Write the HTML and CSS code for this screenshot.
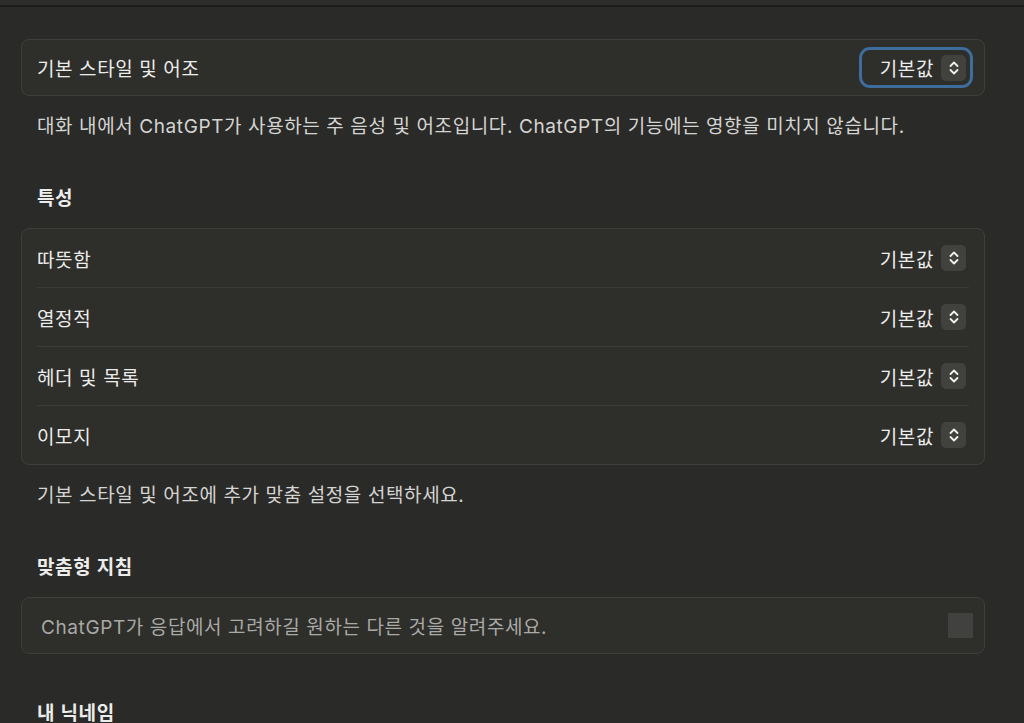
FILE: index.html
```html
<!DOCTYPE html>
<html lang="ko">
<head>
    <meta charset="UTF-8">
    <meta name="viewport" content="width=device-width, initial-scale=1.0">
    <title>개인 맞춤 설정</title>
    <link rel="stylesheet" href="styles.css">
</head>
<body>
    <div class="topbar"></div>

    <div class="content">
        <div class="card">
            <div class="row">
                <span class="label">기본 스타일 및 어조</span>
                <button class="select focused">기본값 <span class="chev"><svg viewBox="0 0 12 16" width="12" height="16"><path d="M2.5 6 L6 2.5 L9.5 6 M2.5 10 L6 13.5 L9.5 10" fill="none" stroke="currentColor" stroke-width="1.8" stroke-linecap="round" stroke-linejoin="round"/></svg></span></button>
            </div>
        </div>
        <p class="hint">대화 내에서 ChatGPT가 사용하는 주 음성 및 어조입니다. ChatGPT의 기능에는 영향을 미치지 않습니다.</p>

        <h3 class="section">특성</h3>
        <div class="card list">
            <div class="row">
                <span class="label">따뜻함</span>
                <button class="select">기본값 <span class="chev"><svg viewBox="0 0 12 16" width="12" height="16"><path d="M2.5 6 L6 2.5 L9.5 6 M2.5 10 L6 13.5 L9.5 10" fill="none" stroke="currentColor" stroke-width="1.8" stroke-linecap="round" stroke-linejoin="round"/></svg></span></button>
            </div>
            <div class="row">
                <span class="label">열정적</span>
                <button class="select">기본값 <span class="chev"><svg viewBox="0 0 12 16" width="12" height="16"><path d="M2.5 6 L6 2.5 L9.5 6 M2.5 10 L6 13.5 L9.5 10" fill="none" stroke="currentColor" stroke-width="1.8" stroke-linecap="round" stroke-linejoin="round"/></svg></span></button>
            </div>
            <div class="row">
                <span class="label">헤더 및 목록</span>
                <button class="select">기본값 <span class="chev"><svg viewBox="0 0 12 16" width="12" height="16"><path d="M2.5 6 L6 2.5 L9.5 6 M2.5 10 L6 13.5 L9.5 10" fill="none" stroke="currentColor" stroke-width="1.8" stroke-linecap="round" stroke-linejoin="round"/></svg></span></button>
            </div>
            <div class="row">
                <span class="label">이모지</span>
                <button class="select">기본값 <span class="chev"><svg viewBox="0 0 12 16" width="12" height="16"><path d="M2.5 6 L6 2.5 L9.5 6 M2.5 10 L6 13.5 L9.5 10" fill="none" stroke="currentColor" stroke-width="1.8" stroke-linecap="round" stroke-linejoin="round"/></svg></span></button>
            </div>
        </div>
        <p class="hint">기본 스타일 및 어조에 추가 맞춤 설정을 선택하세요.</p>

        <h3 class="section">맞춤형 지침</h3>
        <div class="card input-card">
            <span class="placeholder">ChatGPT가 응답에서 고려하길 원하는 다른 것을 알려주세요.</span>
            <span class="grip"></span>
        </div>

        <h3 class="section">내 닉네임</h3>
    </div>
</body>
</html>
```

FILE: styles.css
```css
body {
    margin: 0;
    background-color: #2a2a28;
    color: #ececea;
    font-family: Inter, "Noto Sans CJK KR", sans-serif;
    font-size: 19px;
    letter-spacing: 0.6px;
    overflow: hidden;
    height: 723px;
}

.topbar {
    height: 5px;
    background-color: #2d2d2b;
    border-bottom: 2px solid #1b1b1a;
}

.content {
    width: 964px;
    margin-left: 21px;
    padding-top: 32px;
}

.card {
    background-color: #2e2e2b;
    border: 1px solid #3e3e3b;
    border-radius: 8px;
}

.row {
    display: flex;
    align-items: center;
    justify-content: space-between;
    height: 55px;
    padding: 0 18px 0 15px;
}

.list .row {
    height: 58px;
    margin: 0 15px;
    padding: 0 3px 0 0;
    border-bottom: 1px solid #3a3a37;
}

.list .row:last-child {
    border-bottom: none;
}

.label {
    color: #ececea;
}

.select {
    display: flex;
    align-items: center;
    gap: 7px;
    background: none;
    border: 3px solid transparent;
    border-radius: 11px;
    color: #ececea;
    font-family: inherit;
    font-size: 19px;
    letter-spacing: 0.6px;
    padding: 4px 4px 4px 18px;
    margin-right: -7px;
}

.select.focused {
    border-color: #3e6c9c;
}

.chev {
    display: flex;
    align-items: center;
    justify-content: center;
    width: 25px;
    height: 26px;
    border-radius: 5px;
    background-color: #41413e;
    color: #f0f0ee;
}

.hint {
    margin: 19px 0 0 16px;
    line-height: 24px;
    color: #d4d4d2;
}

.section {
    margin: 48px 0 17px 16px;
    font-size: 19px;
    font-weight: 600;
    line-height: 24px;
    color: #ececea;
}

.input-card {
    display: flex;
    align-items: center;
    justify-content: space-between;
    height: 55px;
    padding: 0 11px 0 19px;
}

.placeholder {
    color: #a9a9a6;
}

.grip {
    width: 25px;
    height: 25px;
    background-color: #414140;
}
```
